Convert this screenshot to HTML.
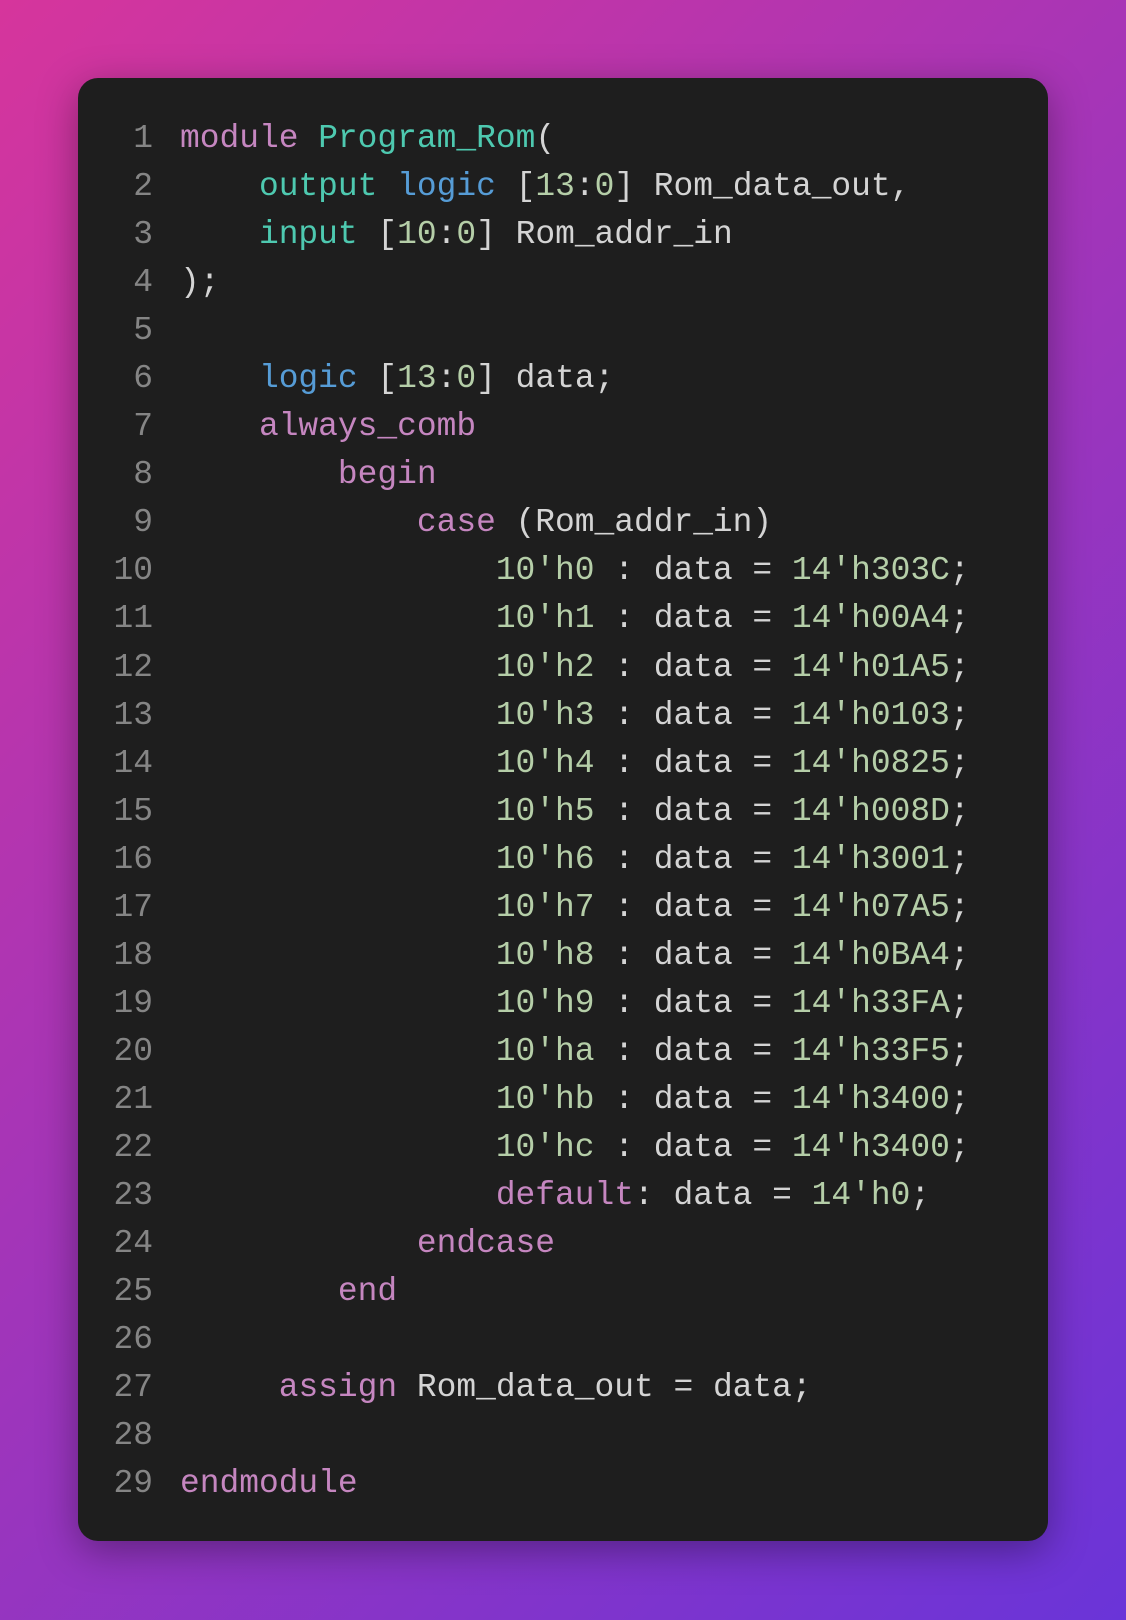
<!DOCTYPE html>
<html><head><style>
html,body{margin:0;padding:0;width:1126px;height:1620px;overflow:hidden}
body{background:linear-gradient(135deg,#d6359c 0%,#a435b8 45%,#6a34d8 100%)}
.card{position:absolute;left:78px;top:78px;width:970px;height:1463px;background:#1e1e1e;border-radius:20px;box-shadow:0 10px 40px rgba(0,0,0,.35)}
pre{position:absolute;margin:0;top:115px;font-family:"Liberation Mono",monospace;font-size:32.9px;line-height:48.04px;color:#d4d4d4}
.ln{left:100px;width:53px;text-align:right;color:#858585}
.code{left:180px}
.k{color:#c586c0}.t{color:#4ec9b0}.b{color:#569cd6}.n{color:#b5cea8}
</style></head><body>
<div class="card"></div>
<pre class="ln">1
2
3
4
5
6
7
8
9
10
11
12
13
14
15
16
17
18
19
20
21
22
23
24
25
26
27
28
29</pre>
<pre class="code"><span class="k">module</span> <span class="t">Program_Rom</span>(
    <span class="t">output</span> <span class="b">logic</span> [<span class="n">13</span>:<span class="n">0</span>] Rom_data_out,
    <span class="t">input</span> [<span class="n">10</span>:<span class="n">0</span>] Rom_addr_in
);

    <span class="b">logic</span> [<span class="n">13</span>:<span class="n">0</span>] data;
    <span class="k">always_comb</span>
        <span class="k">begin</span>
            <span class="k">case</span> (Rom_addr_in)
                <span class="n">10'h0</span> : data = <span class="n">14'h303C</span>;
                <span class="n">10'h1</span> : data = <span class="n">14'h00A4</span>;
                <span class="n">10'h2</span> : data = <span class="n">14'h01A5</span>;
                <span class="n">10'h3</span> : data = <span class="n">14'h0103</span>;
                <span class="n">10'h4</span> : data = <span class="n">14'h0825</span>;
                <span class="n">10'h5</span> : data = <span class="n">14'h008D</span>;
                <span class="n">10'h6</span> : data = <span class="n">14'h3001</span>;
                <span class="n">10'h7</span> : data = <span class="n">14'h07A5</span>;
                <span class="n">10'h8</span> : data = <span class="n">14'h0BA4</span>;
                <span class="n">10'h9</span> : data = <span class="n">14'h33FA</span>;
                <span class="n">10'ha</span> : data = <span class="n">14'h33F5</span>;
                <span class="n">10'hb</span> : data = <span class="n">14'h3400</span>;
                <span class="n">10'hc</span> : data = <span class="n">14'h3400</span>;
                <span class="k">default</span>: data = <span class="n">14'h0</span>;
            <span class="k">endcase</span>
        <span class="k">end</span>

     <span class="k">assign</span> Rom_data_out = data;

<span class="k">endmodule</span></pre>
</body></html>
